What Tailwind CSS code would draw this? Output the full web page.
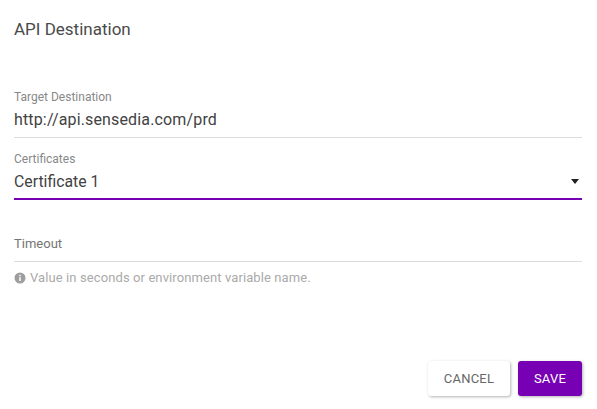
<!DOCTYPE html>
<html lang="en">
<head>
  <meta charset="UTF-8" />
  <title>API Destination</title>
  <script src="https://cdn.jsdelivr.net/npm/@tailwindcss/browser@4"></script>
</head>
<body class="bg-white font-['Roboto',sans-serif] h-[409px] w-[597px] overflow-hidden">
  <div class="flex flex-col h-full pl-[14px] pr-[15px]">
    <h2 class="text-[17px] leading-[20px] mt-[19px] text-[#4a4a4a]">API Destination</h2>

    <div class="mt-[49px] h-[50px] border-b border-[#dcdcdc]">
      <label class="block text-[12px] leading-[13px] pt-[3px] text-[#888888]">Target Destination</label>
      <div class="text-[16px] tracking-[0.15px] leading-[20px] mt-[6px] text-[#424242]">http://api.sensedia.com/prd</div>
    </div>

    <div class="mt-[15px] h-[47px] border-b-2 border-[#7800b4] relative">
      <label class="block text-[12px] leading-[13px] text-[#888888]">Certificates</label>
      <div class="text-[15.800px] leading-[20px] mt-[6px] text-[#424242]">Certificate 1</div>
      <span class="absolute right-[3px] top-[26px] w-0 h-0 border-x-[4.500px] border-x-transparent border-t-[5px] border-t-[#212121]"></span>
    </div>

    <div class="mt-[36px] h-[26px] border-b border-[#dcdcdc] text-[13px] leading-[16px] text-[#757575]">Timeout</div>

    <div class="flex items-center gap-[4px] mt-[8px] text-[13px] leading-[16px] tracking-[0.1px] text-[#aaaaaa]">
      <svg class="w-[12px] h-[12px]" viewBox="0 0 24 24" fill="#9e9e9e"><path d="M12 1a11 11 0 1 0 0 22 11 11 0 0 0 0-22zm1.500 17h-3v-7.500h3V18zm0-9.500h-3v-3h3v3z"/></svg>
      <span>Value in seconds or environment variable name.</span>
    </div>

    <div class="flex justify-end gap-[8px] mt-auto mb-[13px]">
      <button class="w-[82px] h-[35px] bg-white rounded-[3px] text-[13px] text-[#666666] tracking-[0.2px] shadow-[1px_1px_3px_rgba(0,0,0,0.3)]">CANCEL</button>
      <button class="w-[64px] h-[35px] bg-[#7800b4] rounded-[3px] text-[13px] text-white tracking-[0.2px] shadow-[1px_1px_3px_rgba(0,0,0,0.3)]">SAVE</button>
    </div>
  </div>
</body>
</html>
